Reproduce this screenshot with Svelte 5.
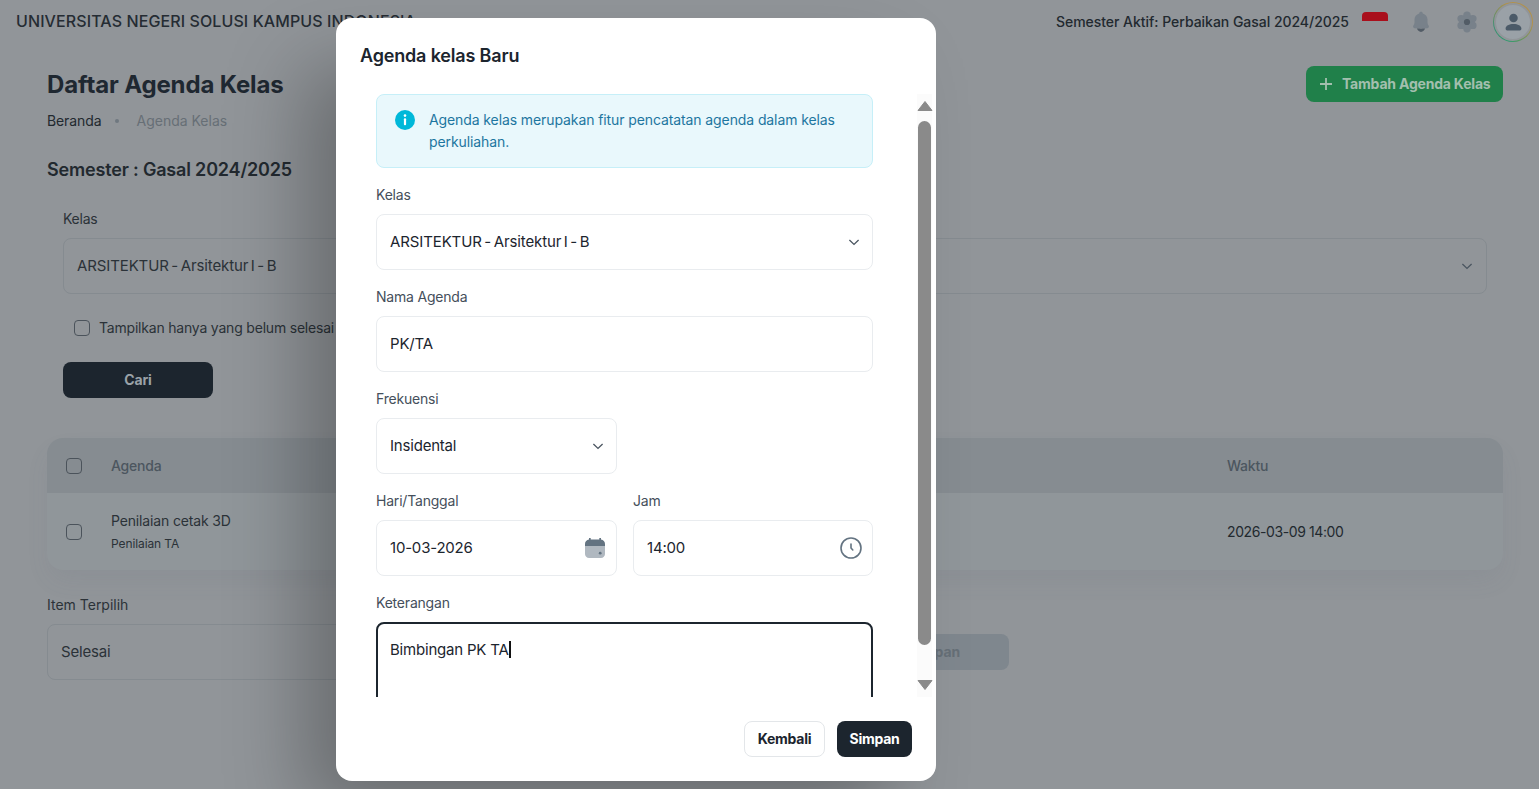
<script>
  const fields = [
    { label: 'Kelas', value: 'ARSITEKTUR - Arsitektur I - B', chevron: true },
    { label: 'Nama Agenda', value: 'PK/TA' }
  ];
  // lobes of the settings icon
  const lobes = [0, 60, 120, 180, 240, 300].map((a) => ({
    x: 12 + 6.8 * Math.sin((a * Math.PI) / 180),
    y: 12 - 6.8 * Math.cos((a * Math.PI) / 180)
  }));
</script>

{#snippet chevron()}
  <svg class="chev" viewBox="0 0 16 16"><path d="M3.400 6l4.600 4.400L12.600 6" /></svg>
{/snippet}

<div class="page">
  <header class="topbar">
    <div class="brand">UNIVERSITAS NEGERI SOLUSI KAMPUS INDONESIA</div>
    <div class="top-right">
      <span class="sem-active">Semester Aktif: Perbaikan Gasal 2024/2025</span>
      <span class="flag"></span>
      <svg class="ico bell" viewBox="0 0 24 24">
        <path class="duo" d="M12 1.800c-1 0-1.700.7-1.800 1.600C7.300 4.200 5.500 6.600 5.500 9.600v2.800c0 1.200-.5 2.200-1.100 3.100-.7 1.100-.2 2.500 1.200 2.700 4.200.5 8.600.5 12.800 0 1.400-.2 1.900-1.600 1.200-2.700-.6-.9-1.100-1.900-1.100-3.100V9.600c0-3-1.800-5.400-4.700-6.200-.1-.9-.8-1.600-1.800-1.600z" />
        <path class="solid" d="M8 18.600c2.700.2 5.300.2 8 0-.4 1.900-2.100 3.300-4 3.300s-3.600-1.400-4-3.300z" />
      </svg>
      <svg class="ico gear" viewBox="0 0 24 24">
        <circle class="duo" cx="12" cy="12" r="7.500" />
        {#each lobes as l}
          <circle class="duo" cx={l.x} cy={l.y} r="3.700" />
        {/each}
        <circle class="solid" cx="12" cy="12" r="3.100" />
      </svg>
      <span class="avatar">
        <span class="avatar-inner">
          <svg viewBox="0 0 24 24"><circle cx="12" cy="7.600" r="4.100" /><path d="M12 13.400c-4.100 0-7.600 1.700-7.600 4.300 0 1.400.9 2 2.200 2h10.800c1.300 0 2.200-.6 2.200-2 0-2.600-3.500-4.300-7.600-4.300z" /></svg>
        </span>
      </span>
    </div>
  </header>

  <main class="content">
    <div class="head-row">
      <div>
        <h1>Daftar Agenda Kelas</h1>
        <nav class="crumbs"><span>Beranda</span><i></i><span class="muted">Agenda Kelas</span></nav>
      </div>
      <button class="btn-add">
        <svg viewBox="0 0 16 16"><path d="M8 2v12M2 8h12" /></svg>
        Tambah Agenda Kelas
      </button>
    </div>

    <h2>Semester : Gasal 2024/2025</h2>

    <section class="filter">
      <div class="flabel">Kelas</div>
      <div class="fselect"><span class="tight">ARSITEKTUR - Arsitektur I - B</span>{@render chevron()}</div>
      <label class="only"><span class="check"></span>Tampilkan hanya yang belum selesai</label>
      <button class="btn-cari">Cari</button>
    </section>

    <section class="table">
      <div class="thead">
        <span class="check"></span>
        <span class="th-agenda">Agenda</span>
        <span class="th-time">Waktu</span>
      </div>
      <div class="trow">
        <span class="check"></span>
        <div class="td-agenda">
          <div>Penilaian cetak 3D</div>
          <small>Penilaian TA</small>
        </div>
        <span class="td-time">2026-03-09 14:00</span>
      </div>
    </section>

    <div class="flabel item-label">Item Terpilih</div>
    <div class="bulk">
      <div class="fselect"><span>Selesai</span></div>
      <button class="btn-off">Simpan</button>
    </div>
  </main>

  <div class="modal-wrap">
    <div class="modal">
      <div class="modal-title">Agenda kelas Baru</div>
      <div class="modal-body">
        <div class="form">
          <div class="alert">
            <svg viewBox="0 0 20 20"><circle cx="10" cy="10" r="10" fill="#00b8d9" /><circle cx="10" cy="5.600" r="1.300" fill="#fff" /><rect x="8.900" y="8.200" width="2.200" height="7" rx="1" fill="#fff" /></svg>
            <p>Agenda kelas merupakan fitur pencatatan agenda dalam kelas perkuliahan.</p>
          </div>

          {#each fields as f}
            <label class="lbl">{f.label}</label>
            <div class="box"><span class:tight={f.chevron}>{f.value}</span>{#if f.chevron}{@render chevron()}{/if}</div>
          {/each}

          <label class="lbl">Frekuensi</label>
          <div class="box half"><span>Insidental</span>{@render chevron()}</div>

          <div class="two">
            <div>
              <label class="lbl">Hari/Tanggal</label>
              <div class="box">
                <span>10-03-2026</span>
                <svg class="picker" viewBox="0 0 24 24">
                  <path fill="#b0b8c0" d="M2 10h20v8c0 2.200-1.800 4-4 4H6c-2.200 0-4-1.800-4-4z" />
                  <path fill="#637381" d="M6 3.500V2h1.700v1.400h8.600V2H18v1.500c2.300.3 4 2.200 4 4.500v2H2V8c0-2.300 1.700-4.200 4-4.500z" />
                  <circle fill="#637381" cx="17.200" cy="17.200" r="1.400" />
                </svg>
              </div>
            </div>
            <div>
              <label class="lbl">Jam</label>
              <div class="box">
                <span>14:00</span>
                <svg class="picker clock" viewBox="0 0 24 24"><circle cx="12" cy="12" r="10" /><path d="M12 8v4l1.800 2" /></svg>
              </div>
            </div>
          </div>

          <label class="lbl">Keterangan</label>
          <div class="area"><span>Bimbingan PK TA</span><b class="caret"></b></div>
        </div>

        <div class="scrollbar">
          <svg viewBox="0 0 16 12"><path d="M8 1.500L15 10.500H1z" /></svg>
          <div class="track"><div class="thumb"></div></div>
          <svg viewBox="0 0 16 12"><path d="M8 10.500L1 1.500H15z" /></svg>
        </div>
      </div>
      <div class="modal-foot">
        <button class="btn-back">Kembali</button>
        <button class="btn-save">Simpan</button>
      </div>
    </div>
  </div>
</div>

<style>
  :global(body) {
    margin: 0;
    font-family: "Inter", "Liberation Sans", sans-serif;
    color: #1c252e;
  }
  button { font: inherit; border: 0; cursor: pointer; }

  .page {
    position: relative;
    height: 789px;
    overflow: hidden;
    background: #919599;
    font-size: 14px;
    line-height: 22px;
  }

  /* top bar */
  .topbar {
    display: flex;
    align-items: flex-start;
    justify-content: space-between;
    padding: 0 6px 0 16px;
    height: 44px;
  }
  .brand { font-size: 16px; line-height: 24px; padding-top: 9px; color: #252c33; letter-spacing: .1px; font-weight: 450; }
  .top-right { display: flex; align-items: center; height: 44px; }
  .sem-active { font-weight: 500; color: #22292f; letter-spacing: -.03px; }
  .flag {
    width: 26px; height: 18px; margin: -2px 21px 0 13px;
    border-radius: 4px 4px 0 0;
    background: linear-gradient(#a90f1c 50%, transparent 50%);
  }
  .ico { width: 24px; height: 24px; }
  .ico .duo { fill: #78818a; }
  .ico .solid { fill: #525c66; }
  .bell { margin-right: 22px; }
  .gear { margin-right: 14px; }
  .avatar {
    width: 40px; height: 40px; border-radius: 50%;
    padding: 1px; box-sizing: border-box;
    background: conic-gradient(#b2914a 0deg, #b2914a 100deg, #2f9a6c 190deg, #3d8f72 260deg, #b2914a 340deg);
    display: flex;
  }
  .avatar-inner {
    flex: 1; border-radius: 50%;
    background: #9aa1a7;
    border: 2px solid #919599;
    display: flex; align-items: center; justify-content: center;
  }
  .avatar svg { width: 25px; height: 25px; fill: #4b5a68; }

  /* page content */
  .content { padding: 0 36px 0 47px; }
  .head-row { display: flex; justify-content: space-between; align-items: flex-start; padding-top: 22px; }
  h1 { margin: 1px 0 0; font-size: 24px; line-height: 36px; font-weight: 700; letter-spacing: -.14px; color: #1f2831; }
  .crumbs { display: flex; align-items: center; margin-top: 7px; color: #22292f; letter-spacing: -.1px; }
  .crumbs i { width: 4px; height: 4px; border-radius: 50%; background: #6f7880; margin: 0 17px 0 14px; }
  .muted { color: #676f76; letter-spacing: 0; }
  .btn-add {
    display: flex; align-items: center; gap: 8px;
    width: 197px; height: 36px; padding: 0 12px;
    box-sizing: border-box;
    border-radius: 8px;
    background: #20804a;
    color: #a3bfae;
    font-weight: 700; font-size: 14px; letter-spacing: -.2px; white-space: nowrap;
  }
  .btn-add svg { width: 16px; height: 16px; fill: none; stroke: #a3bfae; stroke-width: 1.800; flex: none; }
  h2 { margin: 24px 0 0; font-size: 18px; line-height: 28px; font-weight: 600; letter-spacing: -.18px; color: #22292f; }

  .filter { padding: 24px 16px 0; }
  .flabel { color: #2b3238; letter-spacing: -.25px; }
  .fselect {
    display: flex; align-items: center; justify-content: space-between;
    height: 56px; box-sizing: border-box; margin-top: 8px;
    padding: 0 10px 0 13px;
    border: 1px solid #858b90; border-radius: 8px;
    color: #2b3238; font-size: 15px; letter-spacing: -.2px;
  }
  .tight { word-spacing: -1.500px; letter-spacing: -.12px; }
  .chev { width: 16px; height: 16px; fill: none; stroke: #4a5560; stroke-width: 1.300; flex: none; margin-right: 1px; }
  .only { display: flex; align-items: center; gap: 9px; margin: 23px 0 0 11px; color: #2b3238; letter-spacing: -.2px; }
  .check {
    width: 16px; height: 16px; flex: none;
    border: 1.500px solid #4b535b; border-radius: 4px; box-sizing: border-box;
  }
  .btn-cari {
    display: block; margin-top: 23px;
    width: 150px; height: 36px; border-radius: 8px;
    background: #1c252e; color: #9aa2a8; font-weight: 700;
    letter-spacing: -.2px;
  }

  .table {
    margin-top: 40px;
    border-radius: 16px;
    overflow: hidden;
    background: #90969a;
    box-shadow: 0 12px 24px -4px rgba(100, 110, 120, .12);
  }
  .thead, .trow { display: grid; grid-template-columns: 18px 1097px 1fr; align-items: center; padding-left: 19px; }
  .thead { height: 55px; background: #868c91; color: #4c565f; font-weight: 500; letter-spacing: -.2px; }
  .trow { height: 77px; color: #2b3238; }
  .th-agenda, .td-agenda { padding-left: 27px; }
  .td-agenda { letter-spacing: -.15px; padding-bottom: 1px; }
  .td-agenda small { display: block; font-size: 12px; line-height: 18px; margin-top: 3px; letter-spacing: -.1px; }
  .th-time, .td-time { padding-left: 46px; }
  .td-time { letter-spacing: -.4px; color: #22292f; }

  .item-label { margin-top: 24px; letter-spacing: 0; }
  .bulk { display: flex; align-items: center; gap: 16px; width: 962px; }
  .bulk .fselect { flex: 1; }
  .btn-off {
    width: 149px; height: 36px; margin-top: 8px; border-radius: 8px;
    background: #7f878e; color: #666f77; font-weight: 700;
  }

  /* dialog */
  .modal-wrap {
    position: absolute; inset: 0;
    display: flex; align-items: flex-start;
    padding: 18px 0 0 336px;
  }
  .modal {
    width: 600px; height: 763px;
    display: flex; flex-direction: column;
    background: #fff;
    border-radius: 16px;
    box-shadow: -40px 40px 80px -8px rgba(0, 0, 0, .28);
  }
  .modal-title {
    padding: 24px;
    font-size: 18px; line-height: 28px; font-weight: 600; letter-spacing: -.17px;
    color: #1c252e;
  }
  .modal-body { flex: 1; min-height: 0; display: flex; justify-content: space-between; padding-left: 40px; padding-right: 4px; overflow: hidden; }
  .form { width: 497px; flex: none; overflow: hidden; }

  .alert {
    display: flex; gap: 14px;
    padding: 15px 16px 14px 18px; box-sizing: border-box; height: 74px;
    background: #e9f8fc;
    border: 1px solid #c6eff8;
    border-radius: 8px;
    color: #1d76a0;
    margin-bottom: 16px;
  }
  .alert svg { width: 20px; height: 20px; flex: none; }
  .alert p { margin: -1px 0 0; letter-spacing: -.1px; padding-right: 10px; }

  .lbl { display: block; color: #454f5b; letter-spacing: -.2px; margin-bottom: 8px; }
  .box {
    display: flex; align-items: center; justify-content: space-between;
    height: 56px; box-sizing: border-box;
    padding: 0 9px 0 13px; margin-bottom: 16px;
    border: 1px solid #e9ecef; border-radius: 8px;
    color: #1c252e; font-size: 15px; letter-spacing: -.2px;
  }
  .half { width: 241px; }
  .two { display: grid; grid-template-columns: 241px 240px; column-gap: 16px; }
  .picker { width: 24px; height: 24px; flex: none; }
  .clock { fill: none; stroke: #637381; stroke-width: 1.600; stroke-linecap: round; }

  .area {
    height: 120px; box-sizing: border-box;
    padding: 15px 12px;
    border: 2px solid #1c252e; border-radius: 8px;
    font-size: 15px; letter-spacing: -.2px; color: #1c252e;
    display: flex; align-items: flex-start;
  }
  .caret { width: 2px; height: 17px; background: #111; margin-top: 2px; }

  .scrollbar {
    width: 15px; display: flex; flex-direction: column; align-items: center;
    background: #fbfbfb;
  }
  .scrollbar svg { width: 16px; height: 12px; fill: #8a8a8a; stroke: #8a8a8a; stroke-width: 1; stroke-linejoin: round; flex: none; margin: 6px 0 3px; }
  .scrollbar svg:last-child { margin: 0 0 6px; }
  .track { flex: 1; width: 13px; padding-top: 6px; }
  .thumb { width: 13px; height: 524px; border-radius: 7px; background: #8a8a8a; }

  .modal-foot { display: flex; justify-content: flex-end; gap: 12px; padding: 24px; }
  .btn-back, .btn-save { height: 36px; border-radius: 8px; font-weight: 700; letter-spacing: -.25px; }
  .btn-back { width: 81px; background: #fff; border: 1px solid #e3e6e9; color: #1c252e; }
  .btn-save { width: 75px; background: #1c252e; color: #fff; }
</style>
